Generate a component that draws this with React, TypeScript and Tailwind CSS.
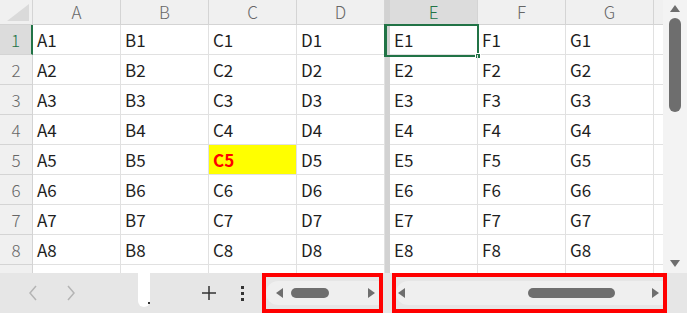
const leftCols = ['A', 'B', 'C', 'D']
const rightCols = ['E', 'F', 'G']
const rows = [1, 2, 3, 4, 5, 6, 7, 8, 9]

function Cell({ col, row }: { col: string; row: number }) {
  const hot = col === 'C' && row === 5
  return (
    <div
      className={`flex h-full w-[88px] shrink-0 items-center border-r border-b border-[#e1e1e1] pl-[4px] ${
        hot ? 'bg-[#ffff00] font-bold text-[#ff0000]' : 'text-[#1f1f1f]'
      }`}
    >
      {row < 9 ? `${col}${row}` : ''}
    </div>
  )
}

function ColHeader({ col, active }: { col: string; active?: boolean }) {
  return (
    <div
      className={`flex h-full w-[88px] shrink-0 items-center justify-center border-r border-b border-[#d4d4d4] font-light ${
        active ? 'bg-[#dcdcdc] text-[#217346]' : 'text-[#666666]'
      }`}
    >
      {col}
    </div>
  )
}

function Triangle({ dir }: { dir: 'up' | 'down' | 'left' | 'right' }) {
  const pts = {
    up: '0,8 5,1 10,8',
    down: '0,1 10,1 5,8',
    left: '8,0 8,10 1,5',
    right: '1,0 1,10 8,5',
  }[dir]
  return (
    <svg width="10" height="10" viewBox="0 0 10 10" className="shrink-0">
      <polygon points={pts} fill="#6e6e6e" />
    </svg>
  )
}

function HScroll({
  thumbLeft,
  thumbWidth,
  className,
  trackClass,
}: {
  thumbLeft: string
  thumbWidth: string
  className: string
  trackClass: string
}) {
  return (
    <div className={`flex h-[40px] shrink-0 items-center border-4 border-[#ff0000] ${className}`}>
      <div className={`flex h-[24px] flex-1 items-center rounded-l-full bg-[#efefef] pr-[2px] ${trackClass}`}>
        <Triangle dir="left" />
        <div className={`${thumbLeft} h-[10px] ${thumbWidth} rounded-full bg-[#6e6e6e]`} />
        <div className="flex-1" />
        <Triangle dir="right" />
      </div>
    </div>
  )
}

export default function App() {
  return (
    <div className="flex h-[318px] w-[687px] flex-col overflow-hidden bg-white font-['Noto_Sans_CJK_JP','Noto_Sans',sans-serif] text-[17px]">
      <div className="flex h-[273px] shrink-0 overflow-hidden">
        {/* left frozen pane */}
        <div className="flex w-[385px] shrink-0 flex-col bg-white">
          <div className="flex h-[25px] shrink-0 bg-[#f0f0f0]">
            <div className="flex h-full w-[33px] shrink-0 items-end justify-end border-r border-b border-[#d4d4d4] pr-[3px] pb-[3px]">
              <svg width="22" height="17" viewBox="0 0 22 17">
                <polygon points="22,0 22,17 0,17" fill="#dadada" />
              </svg>
            </div>
            {leftCols.map((c) => (
              <ColHeader key={c} col={c} />
            ))}
          </div>
          {rows.map((r) => (
            <div key={r} className="flex h-[30px] shrink-0">
              <div
                className={`flex h-full w-[33px] shrink-0 items-center justify-center border-b border-[#d4d4d4] font-light ${
                  r === 1
                    ? 'border-r-2 border-r-[#217346] bg-[#dcdcdc] text-[#217346]'
                    : 'border-r border-r-[#d4d4d4] bg-[#f0f0f0] text-[#666666]'
                }`}
              >
                {r < 9 ? r : ''}
              </div>
              {leftCols.map((c) => (
                <Cell key={c} col={c} row={r} />
              ))}
            </div>
          ))}
        </div>

        {/* split bar */}
        <div className="w-[5px] shrink-0 bg-[#d2d2d2]" />

        {/* right pane */}
        <div className="flex flex-1 flex-col bg-white">
          <div className="flex h-[25px] shrink-0 bg-[#f0f0f0]">
            {rightCols.map((c) => (
              <ColHeader key={c} col={c} active={c === 'E'} />
            ))}
            <div className="flex-1 border-b border-[#d4d4d4]" />
          </div>
          {rows.map((r) => (
            <div key={r} className="relative flex h-[30px] shrink-0">
              {rightCols.map((c) => (
                <Cell key={c} col={c} row={r} />
              ))}
              <div className="flex-1 border-b border-[#e1e1e1]" />
              {r === 1 && (
                <div className="absolute -top-[1px] -left-[6px] h-[33px] w-[95px] border-2 border-l-[3px] border-[#217346]">
                  <div className="absolute -right-[4px] -bottom-[4px] h-[6px] w-[6px] border border-white bg-[#217346]" />
                </div>
              )}
            </div>
          ))}
        </div>

        {/* vertical scrollbar */}
        <div className="flex w-[24px] shrink-0 flex-col items-center bg-[#f3f3f3] pt-[4px] pb-[4px]">
          <Triangle dir="up" />
          <div className="mt-[4px] h-[94px] w-[12px] rounded-full bg-[#6e6e6e]" />
          <div className="flex-1" />
          <Triangle dir="down" />
        </div>
      </div>

      {/* sheet tab bar */}
      <div className="flex h-[40px] shrink-0 items-stretch bg-[#e6e6e6]">
        <div className="flex w-[138px] shrink-0 items-center gap-[28px] pl-[28px] text-[#b4b4b4]">
          <svg width="10" height="16" viewBox="0 0 10 16">
            <polyline points="8,1 2,8 8,15" fill="none" stroke="#b4b4b4" strokeWidth="1.5" />
          </svg>
          <svg width="10" height="16" viewBox="0 0 10 16">
            <polyline points="2,1 8,8 2,15" fill="none" stroke="#b4b4b4" strokeWidth="1.5" />
          </svg>
        </div>
        <div className="relative h-[34px] w-[12px] shrink-0 rounded-b-[6px] bg-white">
          <div className="absolute right-[0px] bottom-[3px] h-[2px] w-[2px] bg-[#333333]" />
        </div>
        <div className="flex w-[112px] shrink-0 items-center">
          <svg width="16" height="16" viewBox="0 0 16 16" className="ml-[51px]">
            <path d="M8 1v14M1 8h14" stroke="#333333" strokeWidth="1.5" />
          </svg>
          <div className="ml-[24px] flex flex-col gap-[3px]">
            <div className="h-[3px] w-[3px] bg-[#333333]" />
            <div className="h-[3px] w-[3px] bg-[#333333]" />
            <div className="h-[3px] w-[3px] bg-[#333333]" />
          </div>
        </div>
        <HScroll className="w-[121px]" trackClass="pl-[9px]" thumbLeft="ml-[6px]" thumbWidth="w-[38px]" />
        <div className="w-[9px] shrink-0" />
        <HScroll className="w-[275px]" trackClass="pl-[1px]" thumbLeft="ml-[121px]" thumbWidth="w-[87px]" />
        <div className="flex-1" />
      </div>
      <div className="flex-1 bg-white" />
    </div>
  )
}
